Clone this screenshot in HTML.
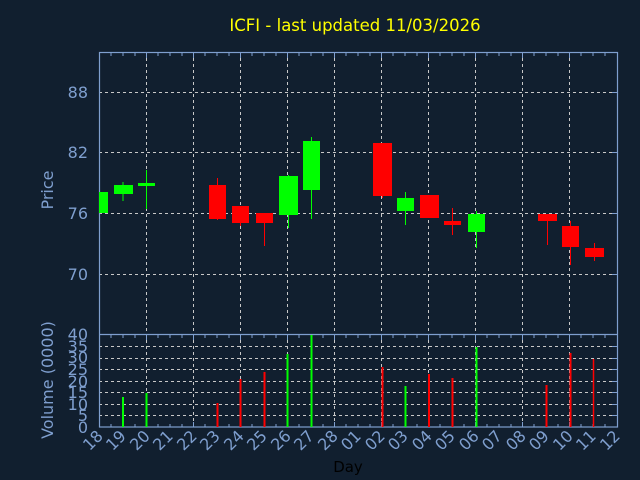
<!DOCTYPE html>
<html><head><style>body{margin:0;background:#111f2f}svg{display:block}</style></head><body>
<svg width="640" height="480" xmlns="http://www.w3.org/2000/svg" font-family="DejaVu Sans, Liberation Sans, sans-serif">
<rect width="640" height="480" fill="#111f2f"/>
<text x="355" y="31" fill="#ffff00" font-size="16.5" text-anchor="middle">ICFI - last updated 11/03/2026</text>
<g stroke="#c8c8c8" stroke-width="1" stroke-dasharray="3,3">
<line x1="146.5" y1="52" x2="146.5" y2="427"/><line x1="193.5" y1="52" x2="193.5" y2="427"/><line x1="240.5" y1="52" x2="240.5" y2="427"/><line x1="287.5" y1="52" x2="287.5" y2="427"/><line x1="334.5" y1="52" x2="334.5" y2="427"/><line x1="381.5" y1="52" x2="381.5" y2="427"/><line x1="428.5" y1="52" x2="428.5" y2="427"/><line x1="475.5" y1="52" x2="475.5" y2="427"/><line x1="522.5" y1="52" x2="522.5" y2="427"/><line x1="569.5" y1="52" x2="569.5" y2="427"/>
<line x1="99" y1="92.5" x2="617" y2="92.5"/><line x1="99" y1="152.5" x2="617" y2="152.5"/><line x1="99" y1="213.5" x2="617" y2="213.5"/><line x1="99" y1="274.5" x2="617" y2="274.5"/>
<line x1="99" y1="346.5" x2="617" y2="346.5"/><line x1="99" y1="358.5" x2="617" y2="358.5"/><line x1="99" y1="369.5" x2="617" y2="369.5"/><line x1="99" y1="381.5" x2="617" y2="381.5"/><line x1="99" y1="392.5" x2="617" y2="392.5"/><line x1="99" y1="404.5" x2="617" y2="404.5"/><line x1="99" y1="415.5" x2="617" y2="415.5"/>
</g>
<g fill="none" stroke="#7f9fcf" stroke-width="1.2">
<rect x="99.5" y="52.5" width="518" height="374.5"/>
<line x1="99" y1="334.5" x2="617" y2="334.5"/>
</g>
<g stroke="#7f9fcf" stroke-width="1" id="ticks">
<path d="M111 53v3M123 53v3M135 53v3M146.5 53v5M158 53v3M170 53v3M182 53v3M193.5 53v5M205 53v3M217 53v3M229 53v3M240.5 53v5M252 53v3M264 53v3M276 53v3M287.5 53v5M299 53v3M311 53v3M323 53v3M334.5 53v5M346 53v3M358 53v3M370 53v3M381.5 53v5M393 53v3M405 53v3M417 53v3M428.5 53v5M440 53v3M452 53v3M464 53v3M475.5 53v5M487 53v3M499 53v3M511 53v3M522.5 53v5M534 53v3M546 53v3M558 53v3M569.5 53v5M581 53v3M593 53v3M605 53v3"/>
<path d="M111 427v-3M123 427v-3M135 427v-3M146.5 427v-5M158 427v-3M170 427v-3M182 427v-3M193.5 427v-5M205 427v-3M217 427v-3M229 427v-3M240.5 427v-5M252 427v-3M264 427v-3M276 427v-3M287.5 427v-5M299 427v-3M311 427v-3M323 427v-3M334.5 427v-5M346 427v-3M358 427v-3M370 427v-3M381.5 427v-5M393 427v-3M405 427v-3M417 427v-3M428.5 427v-5M440 427v-3M452 427v-3M464 427v-3M475.5 427v-5M487 427v-3M499 427v-3M511 427v-3M522.5 427v-5M534 427v-3M546 427v-3M558 427v-3M569.5 427v-5M581 427v-3M593 427v-3M605 427v-3"/>
<path d="M111 335v3M123 335v3M135 335v3M146.5 335v5M158 335v3M170 335v3M182 335v3M193.5 335v5M205 335v3M217 335v3M229 335v3M240.5 335v5M252 335v3M264 335v3M276 335v3M287.5 335v5M299 335v3M311 335v3M323 335v3M334.5 335v5M346 335v3M358 335v3M370 335v3M381.5 335v5M393 335v3M405 335v3M417 335v3M428.5 335v5M440 335v3M452 335v3M464 335v3M475.5 335v5M487 335v3M499 335v3M511 335v3M522.5 335v5M534 335v3M546 335v3M558 335v3M569.5 335v5M581 335v3M593 335v3M605 335v3"/>
<path d="M612 92.5h5M612 152.5h5M612 213.5h5M612 274.5h5M612 346.5h5M612 358.5h5M612 369.5h5M612 381.5h5M612 392.5h5M612 404.5h5M612 415.5h5"/>
</g>
<g>
<rect x="99" y="192" width="9" height="21" fill="#00ff00"/>
<line x1="123" y1="182" x2="123" y2="201" stroke="#00ff00"/><rect x="114" y="185" width="19" height="9" fill="#00ff00"/>
<line x1="146.5" y1="170" x2="146.5" y2="209" stroke="#00ff00"/><rect x="138" y="183" width="17" height="3" fill="#00ff00"/>
<line x1="217.5" y1="178" x2="217.5" y2="220" stroke="#ff0000"/><rect x="209" y="185" width="17" height="34" fill="#ff0000"/>
<line x1="240.5" y1="206" x2="240.5" y2="226" stroke="#ff0000"/><rect x="232" y="206" width="17" height="17" fill="#ff0000"/>
<line x1="264.5" y1="213" x2="264.5" y2="246" stroke="#ff0000"/><rect x="256" y="213" width="17" height="10" fill="#ff0000"/>
<line x1="288.5" y1="175" x2="288.5" y2="228" stroke="#00ff00"/><rect x="279" y="176" width="19" height="39" fill="#00ff00"/>
<line x1="311.5" y1="137" x2="311.5" y2="219" stroke="#00ff00"/><rect x="303" y="141" width="17" height="49" fill="#00ff00"/>
<line x1="382.5" y1="143" x2="382.5" y2="198" stroke="#ff0000"/><rect x="373" y="143" width="19" height="53" fill="#ff0000"/>
<line x1="405.5" y1="192" x2="405.5" y2="225" stroke="#00ff00"/><rect x="397" y="198" width="17" height="13" fill="#00ff00"/>
<rect x="420" y="195" width="19" height="23" fill="#ff0000"/>
<line x1="452.5" y1="208" x2="452.5" y2="235" stroke="#ff0000"/><rect x="444" y="221" width="17" height="4" fill="#ff0000"/>
<line x1="476.5" y1="211" x2="476.5" y2="248" stroke="#00ff00"/><rect x="468" y="214" width="17" height="18" fill="#00ff00"/>
<line x1="547.5" y1="214" x2="547.5" y2="245" stroke="#ff0000"/><rect x="538" y="214" width="19" height="7" fill="#ff0000"/>
<line x1="570.5" y1="221" x2="570.5" y2="265" stroke="#ff0000"/><rect x="562" y="226" width="17" height="21" fill="#ff0000"/>
<line x1="594.5" y1="243" x2="594.5" y2="261" stroke="#ff0000"/><rect x="585" y="248" width="19" height="9" fill="#ff0000"/>
</g>
<g stroke-width="2">
<line x1="123" y1="397" x2="123" y2="427" stroke="#00ff00"/>
<line x1="146.5" y1="393" x2="146.5" y2="427" stroke="#00ff00"/>
<line x1="217.5" y1="403" x2="217.5" y2="427" stroke="#ff0000"/>
<line x1="240.5" y1="379" x2="240.5" y2="427" stroke="#ff0000"/>
<line x1="264.5" y1="372" x2="264.5" y2="427" stroke="#ff0000"/>
<line x1="287.5" y1="354" x2="287.5" y2="427" stroke="#00ff00"/>
<line x1="311.5" y1="335" x2="311.5" y2="427" stroke="#00ff00"/>
<line x1="382.5" y1="367" x2="382.5" y2="427" stroke="#ff0000"/>
<line x1="405.5" y1="386" x2="405.5" y2="427" stroke="#00ff00"/>
<line x1="429" y1="374" x2="429" y2="427" stroke="#ff0000"/>
<line x1="452.5" y1="378" x2="452.5" y2="427" stroke="#ff0000"/>
<line x1="476.5" y1="347" x2="476.5" y2="427" stroke="#00ff00"/>
<line x1="546.5" y1="385" x2="546.5" y2="427" stroke="#ff0000"/>
<line x1="570.5" y1="353" x2="570.5" y2="427" stroke="#ff0000"/>
<line x1="593.5" y1="359" x2="593.5" y2="427" stroke="#ff0000" stroke-width="1.5"/>
</g>
<g fill="#7f9fcf" font-size="16" text-anchor="end">
<text x="88" y="98">88</text><text x="88" y="158">82</text><text x="88" y="219">76</text><text x="88" y="280">70</text>
<text x="88" y="340">40</text><text x="88" y="352">35</text><text x="88" y="363">30</text><text x="88" y="375">25</text><text x="88" y="387">20</text><text x="88" y="398">15</text><text x="88" y="410">10</text><text x="88" y="421">5</text><text x="88" y="433">0</text>
</g>
<g fill="#7f9fcf" font-size="16" text-anchor="middle">
<text transform="translate(53,190) rotate(-90)">Price</text>
<text transform="translate(53,380) rotate(-90)">Volume (0000)</text>
</g>
<g fill="#7f9fcf" font-size="16" text-anchor="end">
<text transform="translate(104,437) rotate(-45)">18</text>
<text transform="translate(127,437) rotate(-45)">19</text>
<text transform="translate(151,437) rotate(-45)">20</text>
<text transform="translate(174,437) rotate(-45)">21</text>
<text transform="translate(198,437) rotate(-45)">22</text>
<text transform="translate(221,437) rotate(-45)">23</text>
<text transform="translate(245,437) rotate(-45)">24</text>
<text transform="translate(268,437) rotate(-45)">25</text>
<text transform="translate(292,437) rotate(-45)">26</text>
<text transform="translate(315,437) rotate(-45)">27</text>
<text transform="translate(339,437) rotate(-45)">28</text>
<text transform="translate(362,437) rotate(-45)">01</text>
<text transform="translate(386,437) rotate(-45)">02</text>
<text transform="translate(409,437) rotate(-45)">03</text>
<text transform="translate(433,437) rotate(-45)">04</text>
<text transform="translate(456,437) rotate(-45)">05</text>
<text transform="translate(480,437) rotate(-45)">06</text>
<text transform="translate(503,437) rotate(-45)">07</text>
<text transform="translate(527,437) rotate(-45)">08</text>
<text transform="translate(550,437) rotate(-45)">09</text>
<text transform="translate(574,437) rotate(-45)">10</text>
<text transform="translate(597,437) rotate(-45)">11</text>
<text transform="translate(621,437) rotate(-45)">12</text>
</g>
<text x="348" y="472" fill="#000" font-size="15" text-anchor="middle">Day</text>
</svg>
</body></html>
